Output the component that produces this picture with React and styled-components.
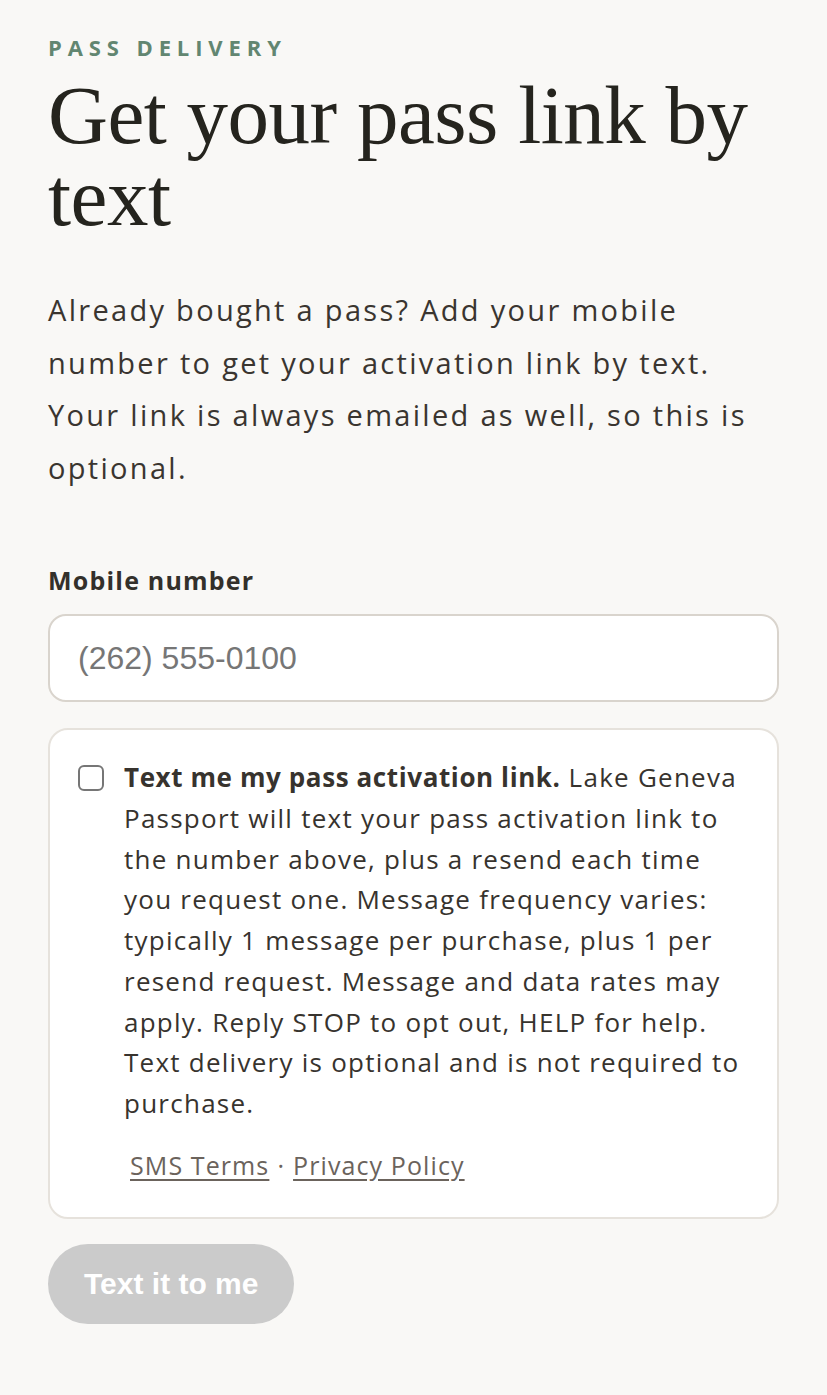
import styled, { createGlobalStyle } from "styled-components";

const GlobalStyle = createGlobalStyle`
  html, body {
    margin: 0;
    padding: 0;
    background: #f9f8f6;
  }
  * {
    box-sizing: border-box;
  }
`;

export default function App() {
  return (
    <>
      <GlobalStyle />
      <Page>
        <Eyebrow>Pass delivery</Eyebrow>
        <Title>Get your pass link by text</Title>
        <Intro>
          Already bought a pass? Add your mobile number to get your activation
          link by text. Your link is always emailed as well, so this is
          optional.
        </Intro>

        <Label htmlFor="mobile">Mobile number</Label>
        <PhoneInput id="mobile" type="tel" placeholder="(262) 555-0100" />

        <ConsentCard>
          <ConsentRow>
            <Checkbox type="checkbox" id="consent" />
            <ConsentText htmlFor="consent">
              <strong>Text me my pass activation link.</strong> Lake Geneva
              Passport will text your pass activation link to the number above,
              plus a resend each time you request one. Message frequency varies:
              typically 1 message per purchase, plus 1 per resend request.
              Message and data rates may apply. Reply STOP to opt out, HELP for
              help. Text delivery is optional and is not required to purchase.
            </ConsentText>
          </ConsentRow>
          <Links>
            <a href="#sms">SMS Terms</a>
            <span>·</span>
            <a href="#privacy">Privacy Policy</a>
          </Links>
        </ConsentCard>

        <SubmitButton type="button" disabled>
          Text it to me
        </SubmitButton>
      </Page>
    </>
  );
}

const Page = styled.main`
  padding: 34px 48px 60px;
  display: flex;
  flex-direction: column;
  align-items: flex-start;
  min-height: 1395px;
`;

const Eyebrow = styled.div`
  font-family: "Open Sans", sans-serif;
  font-size: 22px;
  line-height: 26px;
  font-weight: 700;
  letter-spacing: 5.9px;
  text-transform: uppercase;
  color: #628671;
`;

const Title = styled.h1`
  margin: 14px 0 0;
  font-family: "Liberation Serif", serif;
  font-weight: 400;
  font-size: 83px;
  line-height: 82px;
  letter-spacing: -0.5px;
  color: #25241e;
`;

const Intro = styled.p`
  margin: 46px 0 0;
  font-family: "Open Sans", sans-serif;
  font-size: 29px;
  line-height: 52.5px;
  letter-spacing: 2.3px;
  color: #3a3530;
`;

const Label = styled.label`
  margin-top: 71px;
  font-family: "Open Sans", sans-serif;
  font-weight: 700;
  font-size: 25px;
  line-height: 30px;
  letter-spacing: 1.2px;
  color: #33302b;
`;

const PhoneInput = styled.input`
  margin-top: 19px;
  width: 100%;
  height: 88px;
  padding: 0 28px;
  border: 2px solid #d9d4cd;
  border-radius: 18px;
  background: #ffffff;
  font-family: "Liberation Sans", Arial, sans-serif;
  font-size: 32px;
  color: #2a2723;
  outline: none;

  &::placeholder {
    color: #767676;
  }
`;

const ConsentCard = styled.section`
  margin-top: 26px;
  width: 100%;
  padding: 27px 28px 35px;
  border: 2px solid #e6e2dc;
  border-radius: 20px;
  background: #ffffff;
`;

const ConsentRow = styled.div`
  display: flex;
  gap: 20px;
  align-items: flex-start;
`;

const Checkbox = styled.input`
  appearance: none;
  flex: none;
  margin: 8px 0 0;
  width: 26px;
  height: 26px;
  border: 2px solid #767676;
  border-radius: 6px;
  background: #ffffff;
`;

const ConsentText = styled.label`
  font-family: "Open Sans", sans-serif;
  font-size: 26px;
  line-height: 40.75px;
  letter-spacing: 1.25px;
  color: #37332e;

  strong {
    font-weight: 700;
    letter-spacing: 0.6px;
  }
`;

const Links = styled.div`
  margin-top: 24px;
  padding-left: 52px;
  display: flex;
  gap: 8px;
  font-family: "Open Sans", sans-serif;
  font-size: 25px;
  line-height: 34px;
  letter-spacing: 1.1px;
  color: #6b635c;

  a {
    color: #6b635c;
    text-decoration: underline;
    text-underline-offset: 4px;
  }
`;

const SubmitButton = styled.button`
  margin-top: 25px;
  height: 80px;
  padding: 0 36px;
  border: none;
  border-radius: 40px;
  background: #cbcbcb;
  color: #ffffff;
  font-family: "Liberation Sans", Arial, sans-serif;
  font-weight: 700;
  font-size: 30px;
`;
